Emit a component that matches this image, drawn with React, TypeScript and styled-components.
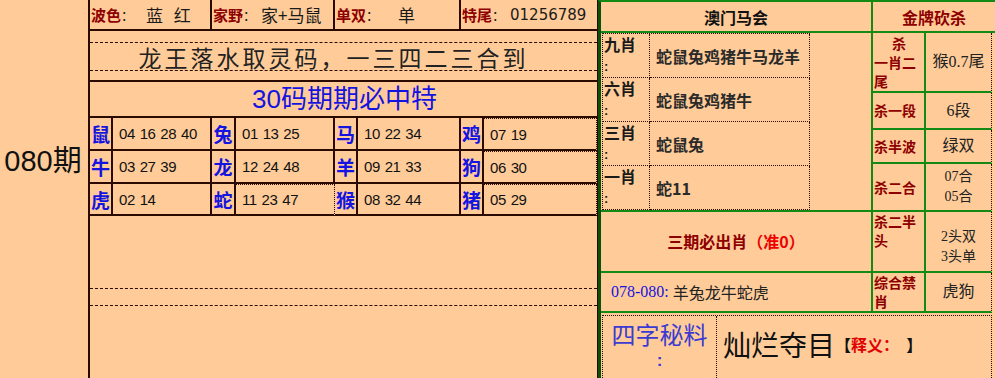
import React from 'react';
import styled, { createGlobalStyle } from 'styled-components';

const INK = '#2b0b00';
const GREEN = '#138a13';
const DEEP_GREEN = '#0a4f0a';
const MAROON = '#8e0000';
const BLUE = '#1414e0';
const SANS = `"Liberation Sans", "Noto Sans CJK SC", sans-serif`;
const SERIF = `"Liberation Serif", "Noto Sans CJK SC", serif`;
const CJK = `"Noto Sans CJK SC", sans-serif`;

const GlobalStyle = createGlobalStyle`
  html, body {
    margin: 0;
    padding: 0;
    background: #ffcc99;
    overflow: hidden;
  }
  body {
    font-family: ${CJK};
    color: #1a1a1a;
  }
`;

const Page = styled.div`
  display: flex;
  width: 995px;
  height: 378px;
  overflow: hidden;
  background: #ffcc99;
`;

const PeriodColumn = styled.div`
  flex: none;
  width: 90px;
  box-sizing: border-box;
  border-right: 2px solid ${INK};
  display: flex;
  justify-content: center;
  padding: 145px 2px 0 0;
  font: 29px/32px ${SANS};
  color: #111;
`;

const LeftPanel = styled.div`
  flex: none;
  width: 508px;
  box-sizing: border-box;
  display: grid;
  grid-template-columns: 23px 99px 24px 99px 23px 103px 23px 113px;
  grid-template-rows: 31px 51px 36px 33px 33px 32px 1fr;
  border-right: 1px solid ${INK};
`;

const InfoCell = styled.div<{ $last?: boolean }>`
  grid-column: span 2;
  display: flex;
  align-items: center;
  box-sizing: border-box;
  border-bottom: 2px solid ${INK};
  border-right: ${(p) => (p.$last ? 'none' : `2px solid ${INK}`)};
  padding-left: 1px;
  white-space: nowrap;
`;

const InfoLabel = styled.span`
  color: ${MAROON};
  font-weight: 700;
  font-size: 15px;
`;

const InfoColon = styled.span`
  font-size: 13px;
  margin-right: 5px;
`;

const InfoValue = styled.span<{ $gap?: number }>`
  font: 17px ${CJK};
  word-spacing: ${(p) => p.$gap ?? 0}px;
  margin-left: ${(p) => p.$gap ?? 0}px;
`;

const Digits = styled.span`
  font: 15px "DejaVu Sans", sans-serif;
`;

const SloganCell = styled.div`
  grid-column: 1 / -1;
  box-sizing: border-box;
  border-bottom: 2px solid ${INK};
  padding-top: 11px;
`;

const SloganBox = styled.div`
  height: 27px;
  border-top: 1px dashed ${INK};
  border-bottom: 1px dashed ${INK};
  display: flex;
  align-items: center;
  justify-content: center;
  font: 23px ${CJK};
  letter-spacing: 3px;
  color: #222;
  padding-right: 20px;
`;

const TitleCell = styled.div`
  grid-column: 1 / -1;
  box-sizing: border-box;
  border-bottom: 2px solid ${INK};
  display: flex;
  align-items: center;
  justify-content: center;
  padding-left: 2px;
  font: 26px/30px ${SANS};
  color: ${BLUE};
`;

const ZodiacLabel = styled.div`
  box-sizing: border-box;
  border-right: 2px solid ${INK};
  border-bottom: 2px solid ${INK};
  display: flex;
  align-items: center;
  justify-content: center;
  font: 700 19px ${CJK};
  color: ${BLUE};
`;

const ZodiacNums = styled.div<{ $dotted?: boolean }>`
  box-sizing: border-box;
  border-bottom: 2px solid ${INK};
  border-right: ${(p) => (p.$dotted ? `1px dotted ${INK}` : `2px solid ${INK}`)};
  border-top: ${(p) => (p.$dotted ? `1px dotted ${INK}` : 'none')};
  display: flex;
  align-items: center;
  padding-left: 6px;
  font: 15px ${SANS};
  letter-spacing: -0.4px;
  word-spacing: 1px;
  color: #111;
`;

const EmptyArea = styled.div`
  grid-column: 1 / -1;
  padding-top: 72px;
`;

const DashedBand = styled.div`
  height: 16px;
  border-top: 1px dashed ${INK};
  border-bottom: 1px dashed ${INK};
`;

const RightPanel = styled.div`
  flex: 1;
  box-sizing: border-box;
  display: grid;
  grid-template-columns: 272px 53px 1fr;
  grid-template-rows: 31px 60px 37px 34px 48px 61px 40px 1fr;
  border-left: 3px solid ${DEEP_GREEN};
  border-top: 2px solid ${GREEN};
`;

const GreenCell = styled.div<{ $noRight?: boolean }>`
  box-sizing: border-box;
  border-bottom: 2px solid ${GREEN};
  border-right: ${(p) => (p.$noRight ? 'none' : `2px solid ${GREEN}`)};
  display: flex;
  align-items: center;
  justify-content: center;
`;

const HeaderCell = styled(GreenCell)<{ $red?: boolean }>`
  grid-column: ${(p) => (p.$red ? '2 / 4' : '1')};
  font: 700 16px ${CJK};
  color: ${(p) => (p.$red ? MAROON : '#111')};
`;

const MacauBlock = styled.div`
  grid-column: 1;
  grid-row: 2 / 6;
  box-sizing: border-box;
  border-right: 2px solid ${GREEN};
  border-bottom: 2px solid ${GREEN};
  padding: 0 0 1px 1px;
`;

const DottedTable = styled.div`
  width: 207px;
  height: 100%;
  display: grid;
  grid-template-columns: 47px 1fr;
  grid-template-rows: repeat(4, 1fr);
  border-top: 1px dotted ${INK};
  border-left: 1px dotted ${INK};
`;

const PickLabel = styled.div`
  box-sizing: border-box;
  border-right: 1px dotted ${INK};
  border-bottom: 1px dotted ${INK};
  padding: 0 0 2px 1px;
  display: flex;
  flex-direction: column;
  justify-content: space-between;
  font: 700 16px/20px ${CJK};
  color: #1a1a1a;
`;

const PickColon = styled.span`
  font: 700 13px/17px ${SANS};
`;

const PickValue = styled.div`
  box-sizing: border-box;
  border-right: 1px dotted ${INK};
  border-bottom: 1px dotted ${INK};
  display: flex;
  align-items: center;
  padding-left: 6px;
  font: 700 16px ${CJK};
  color: #2a2a2a;
`;

const KillLabel = styled(GreenCell)`
  grid-column: 2;
  flex-direction: column;
  align-items: stretch;
  font: 700 14px/19px ${CJK};
  color: ${MAROON};
`;

const KillLine = styled.span<{ $center?: boolean }>`
  display: block;
  text-align: ${(p) => (p.$center ? 'center' : 'left')};
  padding-left: 1px;
`;

const KillValue = styled(GreenCell)`
  grid-column: 3;
  flex-direction: column;
  border-right: 1px dotted ${INK};
  margin-right: 3px;
  font: 16px/20px ${SERIF};
  color: #222;
  text-align: center;
`;

const KillPair = styled.span`
  font: 14px/20px ${SERIF};
`;

const MustCell = styled(GreenCell)`
  grid-column: 1;
  font: 700 16px ${CJK};
  color: ${MAROON};
  padding-bottom: 2px;
`;

const Accent = styled.span`
  color: #ee0000;
`;

const HistoryCell = styled(GreenCell)`
  grid-column: 1;
  justify-content: flex-start;
  padding-left: 10px;
  font: 16px ${CJK};
  color: #222;
`;

const HistoryRange = styled.span`
  font: 16px ${SERIF};
  color: ${BLUE};
  margin-right: 4px;
`;

const SecretRow = styled.div`
  grid-column: 1 / -1;
  padding: 2px 3px 0 1px;
`;

const SecretBox = styled.div`
  height: 100%;
  box-sizing: border-box;
  display: grid;
  grid-template-columns: 114px 1fr;
  border: 1px dotted ${INK};
  border-bottom: none;
`;

const SecretTitle = styled.div`
  border-right: 1px dotted ${INK};
  display: flex;
  flex-direction: column;
  align-items: center;
  color: #3b3bd2;
`;

const SecretHeading = styled.span`
  font: 24px/35px ${CJK};
`;

const SecretColon = styled.span`
  font: 700 17px/20px ${SANS};
`;

const SecretBody = styled.div`
  display: flex;
  align-items: center;
  padding: 0 0 6px 6px;
`;

const SecretWords = styled.span`
  font: 28px ${CJK};
  color: #111;
`;

const Meaning = styled.span`
  font: 700 16px ${CJK};
  color: #111;
  white-space: pre;
`;

const MeaningLabel = styled.span`
  color: #e00000;
`;

const zodiacRows = [
  [
    ['鼠', '04 16 28 40'],
    ['兔', '01 13 25'],
    ['马', '10 22 34'],
    ['鸡', '07 19'],
  ],
  [
    ['牛', '03 27 39'],
    ['龙', '12 24 48'],
    ['羊', '09 21 33'],
    ['狗', '06 30'],
  ],
  [
    ['虎', '02 14'],
    ['蛇', '11 23 47'],
    ['猴', '08 32 44'],
    ['猪', '05 29'],
  ],
];

const picks = [
  ['九肖', '蛇鼠兔鸡猪牛马龙羊'],
  ['六肖', '蛇鼠兔鸡猪牛'],
  ['三肖', '蛇鼠兔'],
  ['一肖', '蛇11'],
];

const isDotted = (row: number, col: number) => col === 3 || (row === 2 && col === 1);

export default function App() {
  return (
    <>
      <GlobalStyle />
      <Page>
        <PeriodColumn>080期</PeriodColumn>

        <LeftPanel>
          <InfoCell>
            <InfoLabel>波色</InfoLabel>
            <InfoColon>：</InfoColon>
            <InfoValue $gap={7}>蓝 红</InfoValue>
          </InfoCell>
          <InfoCell>
            <InfoLabel>家野</InfoLabel>
            <InfoColon>：</InfoColon>
            <InfoValue>家+马鼠</InfoValue>
          </InfoCell>
          <InfoCell>
            <InfoLabel>单双</InfoLabel>
            <InfoColon>：</InfoColon>
            <InfoValue $gap={14}>单</InfoValue>
          </InfoCell>
          <InfoCell $last>
            <InfoLabel>特尾</InfoLabel>
            <InfoColon>：</InfoColon>
            <Digits>01256789</Digits>
          </InfoCell>

          <SloganCell>
            <SloganBox>龙王落水取灵码，一三四二三合到</SloganBox>
          </SloganCell>

          <TitleCell>30码期期必中特</TitleCell>

          {zodiacRows.map((row, r) =>
            row.map(([animal, nums], c) => (
              <React.Fragment key={animal}>
                <ZodiacLabel>{animal}</ZodiacLabel>
                <ZodiacNums $dotted={isDotted(r, c)}>{nums}</ZodiacNums>
              </React.Fragment>
            ))
          )}

          <EmptyArea>
            <DashedBand />
          </EmptyArea>
        </LeftPanel>

        <RightPanel>
          <HeaderCell>澳门马会</HeaderCell>
          <HeaderCell $red $noRight>金牌砍杀</HeaderCell>

          <MacauBlock>
            <DottedTable>
              {picks.map(([label, value]) => (
                <React.Fragment key={label}>
                  <PickLabel>
                    <span>{label}</span>
                    <PickColon>:</PickColon>
                  </PickLabel>
                  <PickValue>{value}</PickValue>
                </React.Fragment>
              ))}
            </DottedTable>
          </MacauBlock>

          <KillLabel style={{ gridRow: 2 }}>
            <KillLine $center>杀</KillLine>
            <KillLine>一肖二</KillLine>
            <KillLine>尾</KillLine>
          </KillLabel>
          <KillValue style={{ gridRow: 2 }}>猴0.7尾</KillValue>

          <KillLabel style={{ gridRow: 3 }}>
            <KillLine>杀一段</KillLine>
          </KillLabel>
          <KillValue style={{ gridRow: 3 }}>6段</KillValue>

          <KillLabel style={{ gridRow: 4 }}>
            <KillLine>杀半波</KillLine>
          </KillLabel>
          <KillValue style={{ gridRow: 4 }}>绿双</KillValue>

          <KillLabel style={{ gridRow: 5 }}>
            <KillLine>杀二合</KillLine>
          </KillLabel>
          <KillValue style={{ gridRow: 5 }}>
            <KillPair>07合</KillPair>
            <KillPair>05合</KillPair>
          </KillValue>

          <MustCell style={{ gridRow: 6 }}>
            三期必出肖<Accent>（准0）</Accent>
          </MustCell>
          <KillLabel style={{ gridRow: 6, justifyContent: 'flex-start' }}>
            <KillLine>杀二半</KillLine>
            <KillLine>头</KillLine>
          </KillLabel>
          <KillValue style={{ gridRow: 6, paddingTop: 10 }}>
            <KillPair>2头双</KillPair>
            <KillPair>3头单</KillPair>
          </KillValue>

          <HistoryCell style={{ gridRow: 7 }}>
            <HistoryRange>078-080:</HistoryRange>羊兔龙牛蛇虎
          </HistoryCell>
          <KillLabel style={{ gridRow: 7 }}>
            <KillLine>综合禁</KillLine>
            <KillLine>肖</KillLine>
          </KillLabel>
          <KillValue style={{ gridRow: 7 }}>虎狗</KillValue>

          <SecretRow style={{ gridRow: 8 }}>
            <SecretBox>
              <SecretTitle>
                <SecretHeading>四字秘料</SecretHeading>
                <SecretColon>:</SecretColon>
              </SecretTitle>
              <SecretBody>
                <SecretWords>灿烂夺目</SecretWords>
                <Meaning>
                  【<MeaningLabel>释义：</MeaningLabel>  】
                </Meaning>
              </SecretBody>
            </SecretBox>
          </SecretRow>
        </RightPanel>
      </Page>
    </>
  );
}
